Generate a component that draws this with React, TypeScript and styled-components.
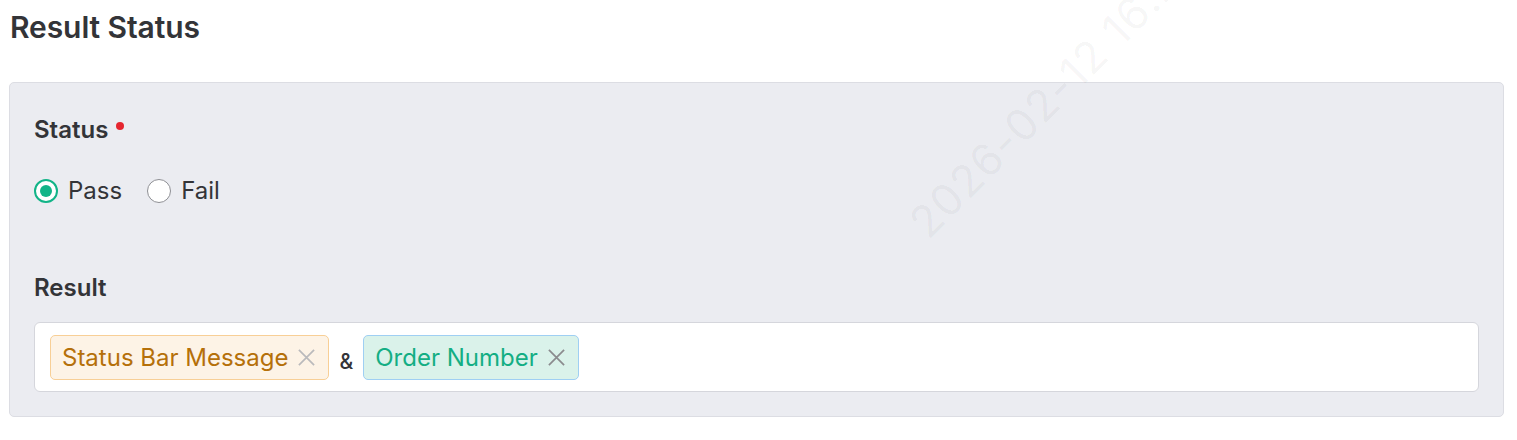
import React, { useState } from 'react'
import styled, { createGlobalStyle } from 'styled-components'

const GlobalStyle = createGlobalStyle`
  body {
    margin: 0;
    background: #fff;
    font-family: Inter, "Noto Sans", sans-serif;
    color: #333438;
  }
`

type Option = { value: string; label: string }
type Field = { id: string; label: string; tone: 'warn' | 'ok' }

const options: Option[] = [
  { value: 'pass', label: 'Pass' },
  { value: 'fail', label: 'Fail' },
]

const fields: Field[] = [
  { id: 'status-bar', label: 'Status Bar Message', tone: 'warn' },
  { id: 'order-number', label: 'Order Number', tone: 'ok' },
]

const App: React.FC = () => {
  const [status, setStatus] = useState('pass')

  return (
    <>
      <GlobalStyle />
      <Page>
        <Title>Result Status</Title>
        <Panel>
          <Label>
            Status
            <Required />
          </Label>
          <RadioGroup>
            {options.map(option => (
              <RadioItem key={option.value} onClick={() => setStatus(option.value)}>
                <RadioCircle checked={status === option.value} />
                {option.label}
              </RadioItem>
            ))}
          </RadioGroup>

          <Label>Result</Label>
          <TagInput>
            {fields.map((field, i) => (
              <React.Fragment key={field.id}>
                {i > 0 && <Joiner>&amp;</Joiner>}
                <Tag tone={field.tone}>
                  {field.label}
                  <CloseIcon tone={field.tone} viewBox="0 0 20 20">
                    <path d="M2 2 L18 18 M18 2 L2 18" />
                  </CloseIcon>
                </Tag>
              </React.Fragment>
            ))}
          </TagInput>
        </Panel>
        <Watermark>2026-02-12 16:20:31</Watermark>
      </Page>
    </>
  )
}

export default App

const Page = styled.div`
  position: relative;
  overflow: hidden;
  height: 440px;
  padding: 0 13px 0 9px;
  box-sizing: border-box;
`

const Title = styled.h1`
  margin: 0;
  padding: 9px 0 0 1px;
  height: 82px;
  box-sizing: border-box;
  font-size: 30px;
  line-height: 36px;
  font-weight: 600;
  color: #333438;
  letter-spacing: -0.1px;
`

const Panel = styled.section`
  display: flex;
  flex-direction: column;
  align-items: flex-start;
  background: #ebecf1;
  border: 1px solid #dcdde3;
  border-radius: 5px;
  padding: 29px 24px 24px;
`

const Label = styled.div`
  position: relative;
  font-size: 24px;
  line-height: 36px;
  font-weight: 600;
  color: #333438;
`

const Required = styled.span`
  position: absolute;
  top: 10px;
  right: -16px;
  width: 8px;
  height: 8px;
  border-radius: 50%;
  background: #e5262f;
`

const RadioGroup = styled.div`
  display: flex;
  gap: 25px;
  margin: 25px 0 61px;
`

const RadioItem = styled.label`
  display: flex;
  align-items: center;
  gap: 10px;
  font-size: 24px;
  line-height: 36px;
  color: #333438;
  cursor: pointer;
`

const RadioCircle = styled.span<{ checked: boolean }>`
  width: 24px;
  height: 24px;
  border-radius: 50%;
  box-sizing: border-box;
  background: #fff;
  border: ${p => (p.checked ? '2px solid #12b488' : '1px solid #8e8f94')};
  display: flex;
  align-items: center;
  justify-content: center;

  &::after {
    content: '';
    display: ${p => (p.checked ? 'block' : 'none')};
    width: 12px;
    height: 12px;
    border-radius: 50%;
    background: #12b488;
  }
`

const TagInput = styled.div`
  align-self: stretch;
  display: flex;
  align-items: center;
  gap: 10px;
  height: 70px;
  box-sizing: border-box;
  margin-top: 16px;
  padding: 0 15px;
  background: #fff;
  border: 1px solid #d5d6dc;
  border-radius: 6px;
`

const tones = {
  warn: { bg: '#fdf3e6', border: '#f8cf96', color: '#b5700a', icon: '#bababc' },
  ok: { bg: '#daf2ea', border: '#9fcff3', color: '#14ae84', icon: '#8b8b8e' },
}

const Tag = styled.span<{ tone: 'warn' | 'ok' }>`
  display: inline-flex;
  align-items: center;
  gap: 9px;
  height: 45px;
  box-sizing: border-box;
  padding: 0 12px 0 11px;
  font-size: 24px;
  color: ${p => tones[p.tone].color};
  background: ${p => tones[p.tone].bg};
  border: 1px solid ${p => tones[p.tone].border};
  border-radius: 5px;
`

const CloseIcon = styled.svg<{ tone: 'warn' | 'ok' }>`
  width: 19px;
  height: 19px;
  stroke: ${p => tones[p.tone].icon};
  stroke-width: 1.8;
  fill: none;
`

const Joiner = styled.span`
  font-size: 21px;
  font-weight: 500;
  color: #333438;
  padding-top: 8px;
`

const Watermark = styled.div`
  position: absolute;
  left: 898px;
  top: 210px;
  transform-origin: 0 0;
  transform: rotate(-45deg);
  white-space: nowrap;
  font-size: 44px;
  font-weight: 400;
  color: rgba(0, 0, 0, 0.045);
  pointer-events: none;
  letter-spacing: 1px;
`
